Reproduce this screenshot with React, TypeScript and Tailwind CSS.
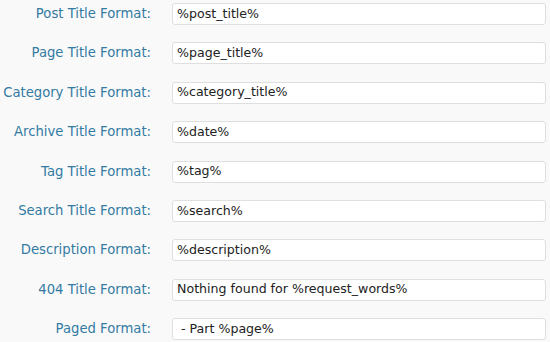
import React from 'react';

const rows: [string, string][] = [
  ['Post Title Format:', '%post_title%'],
  ['Page Title Format:', '%page_title%'],
  ['Category Title Format:', '%category_title%'],
  ['Archive Title Format:', '%date%'],
  ['Tag Title Format:', '%tag%'],
  ['Search Title Format:', '%search%'],
  ['Description Format:', '%description%'],
  ['404 Title Format:', 'Nothing found for %request_words%'],
  ['Paged Format:', ' - Part %page%'],
];

export default function App() {
  return (
    <div className="w-[550px] h-[342px] overflow-hidden bg-[#f9f9f9] font-['DejaVu_Sans',Verdana,sans-serif]">
      <div className="flex flex-col pt-[3px] gap-[17.4px]">
        {rows.map(([label, value]) => (
          <div key={label} className="flex items-center h-[22px]">
            <div className="w-[151px] text-right text-[13.2px] text-[#337ba3] whitespace-nowrap">{label}</div>
            <div className="ml-[21px] w-[374px] h-[22px] bg-white border border-[#dfdfdf] rounded-[3px] flex items-center pl-[4px] text-[12.6px] text-[#222] whitespace-pre">
              {value}
            </div>
          </div>
        ))}
      </div>
    </div>
  );
}
